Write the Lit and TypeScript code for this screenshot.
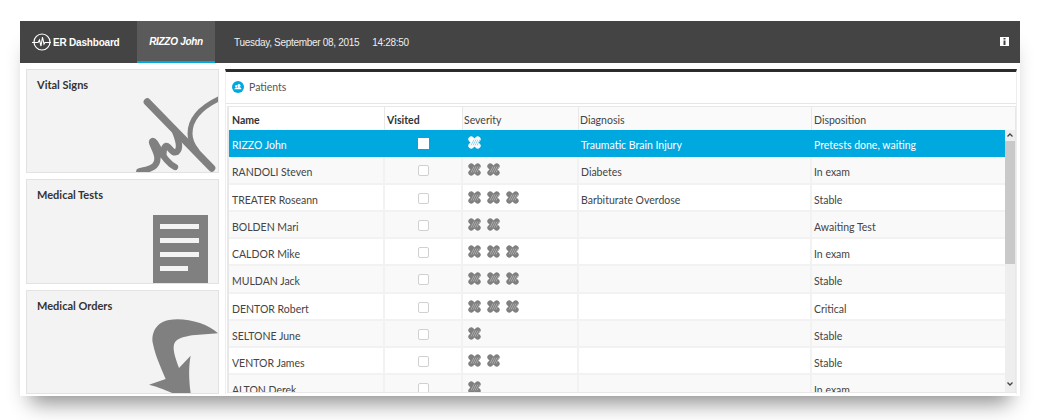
import { LitElement, html, css, svg } from "lit";
import { customElement } from "lit/decorators.js";
import { classMap } from "lit/directives/class-map.js";

interface Patient {
  name: string;
  severity: number;
  diagnosis: string;
  disposition: string;
}

const PATIENTS: Patient[] = [
  { name: "RIZZO John", severity: 1, diagnosis: "Traumatic Brain Injury", disposition: "Pretests done, waiting" },
  { name: "RANDOLI Steven", severity: 2, diagnosis: "Diabetes", disposition: "In exam" },
  { name: "TREATER Roseann", severity: 3, diagnosis: "Barbiturate Overdose", disposition: "Stable" },
  { name: "BOLDEN Mari", severity: 2, diagnosis: "", disposition: "Awaiting Test" },
  { name: "CALDOR Mike", severity: 3, diagnosis: "", disposition: "In exam" },
  { name: "MULDAN Jack", severity: 3, diagnosis: "", disposition: "Stable" },
  { name: "DENTOR Robert", severity: 3, diagnosis: "", disposition: "Critical" },
  { name: "SELTONE June", severity: 1, diagnosis: "", disposition: "Stable" },
  { name: "VENTOR James", severity: 2, diagnosis: "", disposition: "Stable" },
  { name: "ALTON Derek", severity: 1, diagnosis: "", disposition: "In exam" },
];

const bandage = () => html`
  <svg class="bandage" width="13" height="13" viewBox="0 0 13 13">
    <g class="arms">
      <rect x="-1" y="3.600" width="15" height="5.800" rx="2.900" transform="rotate(45 6.500 6.500)"></rect>
      <rect x="-1" y="3.600" width="15" height="5.800" rx="2.900" transform="rotate(-45 6.500 6.500)"></rect>
    </g>
    <g class="hatch">
      ${[3, 5, 7, 9].map((x) => svg`<line x1=${x} y1="9.500" x2=${x + 3} y2="3.500"></line>`)}
    </g>
  </svg>
`;

@customElement("app-root")
export class AppRoot extends LitElement {
  static override styles = css`
    :host {
      display: block;
      width: 1040px;
      height: 420px;
      background: #fff;
      overflow: hidden;
      font-family: Lato, "Open Sans", sans-serif;
      color: #444;
    }

    .page {
      padding: 21px 20px 0;
    }

    .window {
      height: 375px;
      background: #fff;
      box-shadow: 0 17px 20px -10px rgba(0, 0, 0, 0.45);
      display: flex;
      flex-direction: column;
    }

    /* Top bar */
    .topbar {
      height: 42px;
      flex: none;
      background: #444;
      display: flex;
      align-items: stretch;
      color: #fff;
      font-family: "Liberation Sans", Arial, sans-serif;
      font-size: 10px;
      letter-spacing: -0.3px;
    }

    .brand {
      width: 117px;
      display: flex;
      align-items: center;
      padding-left: 11px;
      box-sizing: border-box;
      font-weight: 700;
      letter-spacing: -0.2px;
    }

    .tab {
      width: 78px;
      display: flex;
      align-items: center;
      justify-content: center;
      background: #5a5a5a;
      border-bottom: 2px solid #00a8e0;
      box-sizing: border-box;
      font-weight: 700;
      font-style: italic;
    }

    .clock {
      margin-left: 19px;
      display: flex;
      align-items: center;
      gap: 13px;
      color: #eee;
    }

    .info {
      margin: 0 11px 2px auto;
      align-self: center;
      width: 9px;
      height: 9px;
      display: block;
    }

    /* Body */
    .main {
      flex: 1;
      min-height: 0;
      display: flex;
      gap: 6px;
      padding: 6px 3px 2px 6px;
    }

    .side {
      width: 193px;
      flex: none;
      display: flex;
      flex-direction: column;
      gap: 6px;
    }

    .card {
      flex: 1;
      min-height: 0;
      display: flex;
      justify-content: space-between;
      background: #f3f3f3;
      border: 1px solid #e2e2e2;
      overflow: hidden;
    }

    .card h3 {
      margin: 7px 0 0 10px;
      font-size: 11px;
      line-height: 15px;
      font-weight: 700;
      color: #333;
      white-space: nowrap;
    }

    .card svg {
      align-self: flex-end;
      flex: none;
      display: block;
    }

    .card .doc {
      margin-right: 10px;
    }

    /* Patients panel */
    .panel {
      flex: 1;
      min-width: 0;
      display: flex;
      flex-direction: column;
      border-top: 3px solid #2b2b2b;
      border-left: 1px solid #eee;
      border-right: 1px solid #eee;
    }

    .panel-head {
      height: 32px;
      flex: none;
      display: flex;
      align-items: center;
      gap: 5px;
      padding: 0 0 1px 6px;
      box-sizing: border-box;
      font-size: 10.5px;
      color: #555;
      border-bottom: 1px solid #e6e6e6;
    }

    .grid {
      flex: 1;
      min-height: 0;
      margin: 2px 0 1px 1px;
      border: 1px solid #e8e8e8;
      border-left-width: 2px;
      display: flex;
      flex-direction: column;
    }

    .cols {
      display: grid;
      grid-template-columns: 156px 78px 116px 233px 1fr;
    }

    .header {
      height: 23px;
      flex: none;
      background: #fafafa;
      font-size: 10.5px;
      line-height: 27px;
    }

    .header > div {
      height: 23px;
      border-right: 1px solid #e8e8e8;
    }

    .header > div:nth-child(1),
    .header > div:nth-child(2) {
      background: #fff;
      font-weight: 700;
      color: #333;
      padding-left: 3px;
    }

    .header > div:nth-child(2) {
      padding-left: 2px;
    }

    .header > div:nth-child(n + 3) {
      padding-left: 1px;
    }

    .header > div:nth-child(5) {
      border-right: none;
      padding-left: 2px;
    }

    .scroller {
      flex: 1;
      min-height: 0;
      display: flex;
    }

    .rows {
      flex: 1;
      min-width: 0;
      overflow: hidden;
    }

    .row {
      height: 27.25px;
      box-sizing: border-box;
      font-size: 10.5px;
      line-height: 31px;
      background: #fff;
      border-bottom: 2px solid #f2f2f2;
    }

    .row:nth-child(even) {
      background: #f9f9f9;
    }

    .row > div {
      height: 25.25px;
      padding-left: 2px;
      border-right: 2px solid #f2f2f2;
      white-space: nowrap;
      overflow: hidden;
    }

    .row > div:first-child {
      padding-left: 3px;
    }

    .row > div:last-child {
      border-right: none;
    }

    .row.selected {
      background: #00a8e0;
      color: #fff;
      border-bottom-color: #00a8e0;
    }

    .row.selected > div {
      border-right-color: #00a8e0;
    }

    .row > .check {
      display: flex;
      align-items: center;
      justify-content: center;
      padding: 2px 0 0;
      box-sizing: border-box;
    }

    .box {
      width: 9px;
      height: 9px;
      border: 1px solid #d0d0d0;
      border-radius: 2px;
      background: #fff;
    }

    .selected .box {
      border-color: #fff;
      border-radius: 0;
    }

    .row > .sev {
      display: flex;
      gap: 6px;
      padding: 6px 0 0 5px;
      box-sizing: border-box;
    }

    .bandage {
      display: block;
    }

    .arms {
      fill: #7f7f7f;
    }

    .hatch line {
      stroke: #b4b4b4;
      stroke-width: 0.8;
    }

    .selected .arms {
      fill: #fff;
    }

    .selected .hatch line {
      stroke: #7fd0ee;
    }

    /* Scrollbar */
    .bar {
      width: 10px;
      flex: none;
      display: flex;
      flex-direction: column;
      background: #eee;
    }

    .arrow {
      height: 11px;
      flex: none;
      display: block;
    }

    .thumb {
      height: 123px;
      flex: none;
      background: #c9c9c9;
    }

    .bar .arrow:last-child {
      margin-top: auto;
      margin-bottom: 3px;
    }
  `;

  private renderRow(p: Patient, i: number) {
    return html`
      <div class="row cols ${classMap({ selected: i === 0 })}">
        <div>${p.name}</div>
        <div class="check"><span class="box"></span></div>
        <div class="sev">${Array.from({ length: p.severity }, bandage)}</div>
        <div>${p.diagnosis}</div>
        <div>${p.disposition}</div>
      </div>
    `;
  }

  override render() {
    return html`
      <div class="page">
        <div class="window">
          <header class="topbar">
            <div class="brand">
              <svg width="22" height="20" viewBox="0 0 22 20" fill="none" stroke="#fff">
                <circle cx="11" cy="10" r="8" stroke-width="1.200"></circle>
                <path d="M1 10.500h6l1.500-2.500 1.500 6 1.500-9 1.500 7 1-1.500h6" stroke-width="1.100"></path>
              </svg>
              <span>ER Dashboard</span>
            </div>
            <div class="tab">RIZZO John</div>
            <div class="clock">
              <span>Tuesday, September 08, 2015</span>
              <span>14:28:50</span>
            </div>
            <svg class="info" viewBox="0 0 9 9">
              <rect width="9" height="9" fill="#fff"></rect>
              <rect x="3.500" y="1" width="2" height="1.500" fill="#444"></rect>
              <rect x="3.500" y="3.500" width="2" height="4.500" fill="#444"></rect>
            </svg>
          </header>

          <div class="main">
            <aside class="side">
              <section class="card">
                <h3>Vital Signs</h3>
                <svg width="88" height="80" viewBox="0 0 264 240" fill="none" stroke="#808080" stroke-linecap="round" stroke-linejoin="round">
                  <path d="M52 30L245 228" stroke-width="22"></path>
                  <path d="M28 238C60 232 85 225 82 195C80 175 60 150 68 147C78 145 95 205 135 225" stroke-width="19"></path>
                  <path d="M100 190C100 170 105 155 115 165C125 175 130 185 140 180C152 170 148 150 135 118" stroke-width="19"></path>
                  <path d="M268 20C215 45 180 80 180 125C180 145 188 160 200 175" stroke-width="15"></path>
                </svg>
              </section>
              <section class="card">
                <h3>Medical Tests</h3>
                <svg class="doc" width="55" height="68" viewBox="0 0 55 68">
                  <rect width="55" height="68" fill="#808080"></rect>
                  <g fill="#f3f3f3">
                    <rect x="7" y="9" width="39" height="5"></rect>
                    <rect x="7" y="23" width="39" height="5"></rect>
                    <rect x="7" y="37" width="39" height="5"></rect>
                    <rect x="7" y="51" width="28" height="5"></rect>
                  </g>
                </svg>
              </section>
              <section class="card">
                <h3>Medical Orders</h3>
                <svg width="79" height="79" viewBox="0 0 237 237">
                  <path fill="#808080" d="M237 58C205 28 140 10 90 18C50 25 35 60 42 90C50 130 70 170 80 195L30 212C60 220 85 230 100 237L155 237C150 200 148 160 155 125L120 162C108 130 98 100 108 85C122 62 190 62 237 58Z"></path>
                </svg>
              </section>
            </aside>

            <section class="panel">
              <div class="panel-head">
                <svg width="12" height="12" viewBox="0 0 12 12">
                  <circle cx="6" cy="6" r="6" fill="#00a8e0"></circle>
                  <circle cx="7" cy="4.600" r="1.500" fill="#fff"></circle>
                  <circle cx="4.300" cy="5.200" r="1.100" fill="#fff"></circle>
                  <path d="M2.400 8.300c.2-1.300 1-1.800 1.900-1.800.4 0 .700.100 1 .2.400-.4 1-.6 1.700-.6 1.200 0 2.200.700 2.500 2.200z" fill="#fff"></path>
                </svg>
                <span>Patients</span>
              </div>
              <div class="grid">
                <div class="header cols">
                  <div>Name</div>
                  <div>Visited</div>
                  <div>Severity</div>
                  <div>Diagnosis</div>
                  <div>Disposition</div>
                </div>
                <div class="scroller">
                  <div class="rows">${PATIENTS.map((p, i) => this.renderRow(p, i))}</div>
                  <div class="bar">
                    <svg class="arrow" viewBox="0 0 10 11" fill="none" stroke="#444" stroke-width="1.300">
                      <path d="M2.500 6.500L5 4l2.500 2.500"></path>
                    </svg>
                    <div class="thumb"></div>
                    <svg class="arrow" viewBox="0 0 10 11" fill="none" stroke="#444" stroke-width="1.300">
                      <path d="M2.500 4.500L5 7l2.500-2.500"></path>
                    </svg>
                  </div>
                </div>
              </div>
            </section>
          </div>
        </div>
      </div>
    `;
  }
}

declare global {
  interface HTMLElementTagNameMap {
    "app-root": AppRoot;
  }
}
